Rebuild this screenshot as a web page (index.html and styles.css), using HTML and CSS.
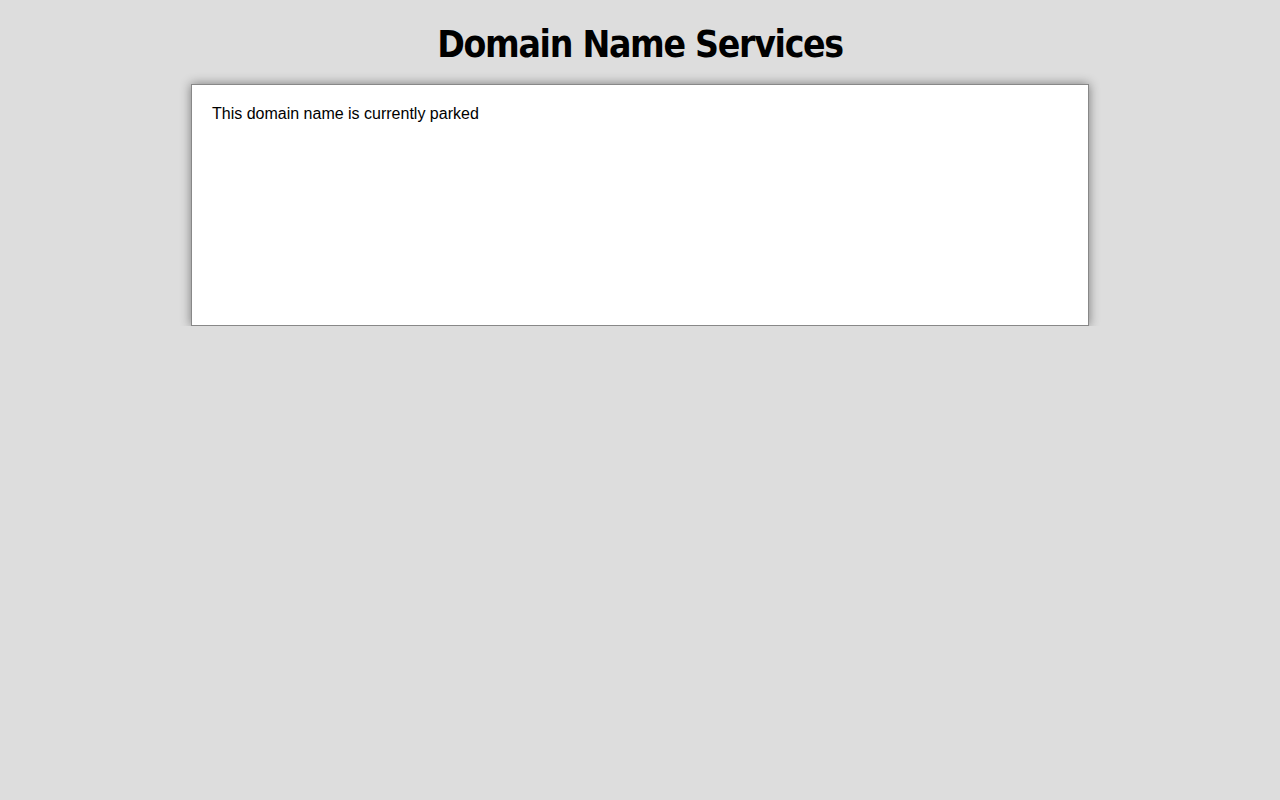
FILE: index.html
```html
<!DOCTYPE html>
<html>
<head>
<meta charset="utf-8">
<title>Domain Name Services</title>
<link rel="stylesheet" href="styles.css">
</head>
<body>
<h1 class="title">Domain Name Services</h1>
<div class="panel">
<p class="msg">This domain name is currently parked</p>
</div>
</body>
</html>
```
FILE: styles.css
```css
html, body {
  margin: 0;
  padding: 0;
  background: #dddddd;
}
body {
  padding-top: 23px;
}
.title {
  margin: 0 0 17px 0;
  text-align: center;
  font-family: "DejaVu Sans", Verdana, sans-serif;
  font-weight: bold;
  font-stretch: condensed;
  font-size: 37px;
  letter-spacing: -1.3px;
  line-height: 44px;
  color: #000;
}
.panel {
  box-sizing: border-box;
  width: 898px;
  height: 242px;
  margin: 0 auto;
  background: #fff;
  border: 1px solid #888;
  box-shadow: 0 0 10px rgba(0,0,0,0.45);
  padding: 19px 20px;
}
.msg {
  margin: 0;
  font-family: "Liberation Sans", Arial, sans-serif;
  font-size: 16px;
  line-height: 20px;
  color: #000;
}
```
